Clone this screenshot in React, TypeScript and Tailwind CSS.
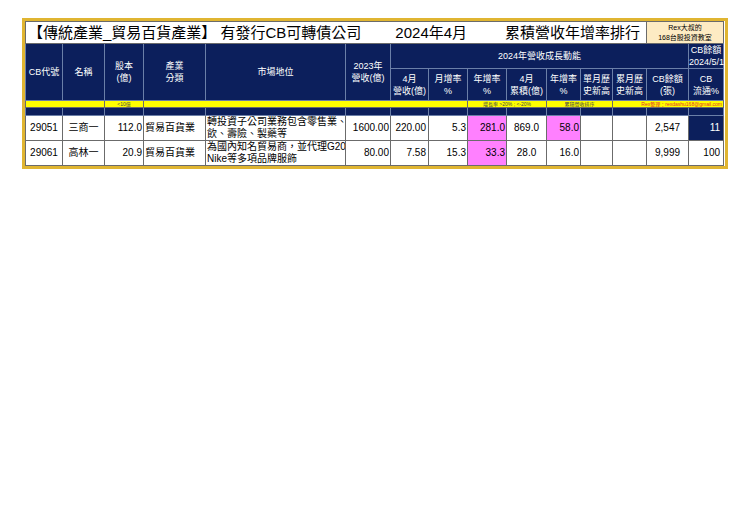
const W = [37, 42, 39, 62, 140, 45, 38, 39, 39, 40, 34, 32, 34, 42, 35];

const th = "border border-[#6b7fa8] bg-[#0c1f5c] text-white font-normal text-[9px] leading-[12px] text-center align-middle";
const td = "border border-[#6b6b6b] text-[10px] leading-[12px] text-black align-middle";

type Row = {
  code: string; name: string; cap: string; ind: string; pos: [string, string]; rev: string;
  m: string; mom: string; yoy: string; cum: string; cyoy: string; cb: string; flow: string;
  yoyPink: boolean; cyoyPink: boolean; flowNavy: boolean;
};

const rows: Row[] = [
  { code: "29051", name: "三商一", cap: "112.0", ind: "貿易百貨業", pos: ["轉投資子公司業務包含零售業、餐", "飲、壽險、製藥等"], rev: "1600.00", m: "220.00", mom: "5.3", yoy: "281.0", cum: "869.0", cyoy: "58.0", cb: "2,547", flow: "11", yoyPink: true, cyoyPink: true, flowNavy: true },
  { code: "29061", name: "高林一", cap: "20.9", ind: "貿易百貨業", pos: ["為國內知名貿易商，並代理G2000、", "Nike等多項品牌服飾"], rev: "80.00", m: "7.58", mom: "15.3", yoy: "33.3", cum: "28.0", cyoy: "16.0", cb: "9,999", flow: "100", yoyPink: true, cyoyPink: false, flowNavy: false },
];

export default function App() {
  return (
    <div className="w-[740px] h-[523px] bg-white pt-[18px] pl-[22px]" style={{ fontFamily: '"Liberation Sans", "Noto Sans CJK TC", sans-serif' }}>
      <div className="w-[706px] border-[3px] border-[#e0b531] bg-white overflow-hidden">
        <table className="border-collapse table-fixed w-[698px]">
          <colgroup>
            {W.map((w, i) => <col key={i} style={{ width: w }} />)}
          </colgroup>
          <tbody>
            <tr className="h-[22px]">
              <td colSpan={13} className="border border-[#6b6b6b] text-[15px] leading-[20px] text-black whitespace-nowrap pl-[2px]">
                【傳統產業_貿易百貨產業】 有發行CB可轉債公司<span className="ml-[34px]">2024年4月</span><span className="ml-[38px]">累積營收年增率排行</span>
              </td>
              <td colSpan={2} className="border border-[#6b6b6b] bg-[#fdebc3] text-[7px] leading-[10px] text-center">
                Rex大叔的<br />168台股投資教室
              </td>
            </tr>
            <tr className="h-[20px]">
              <th rowSpan={2} className={th}>CB代號</th>
              <th rowSpan={2} className={th}>名稱</th>
              <th rowSpan={2} className={th}>股本<br />(億)</th>
              <th rowSpan={2} className={th}>產業<br />分類</th>
              <th rowSpan={2} className={th}>市場地位</th>
              <th rowSpan={2} className={th}>2023年<br />營收(億)</th>
              <th colSpan={8} className={th}>2024年營收成長動能</th>
              <th colSpan={2} className={th}>CB餘額<br />2024/5/10</th>
            </tr>
            <tr className="h-[32px]">
              <th className={th}>4月<br />營收(億)</th>
              <th className={th}>月增率<br />%</th>
              <th className={th}>年增率<br />%</th>
              <th className={th}>4月<br />累積(億)</th>
              <th className={th}>年增率<br />%</th>
              <th className={th}>單月歷<br />史新高</th>
              <th className={th}>累月歷<br />史新高</th>
              <th className={th}>CB餘額<br />(張)</th>
              <th className={th}>CB<br />流通%</th>
            </tr>
            <tr className="h-[7px] bg-[#ffff00] text-[5px] leading-[6px] text-[#444]">
              <td colSpan={2} className="border border-[#6b6b6b]"></td>
              <td className="border border-[#6b6b6b] text-center">&lt;10億</td>
              <td colSpan={5} className="border border-[#6b6b6b]"></td>
              <td colSpan={2} className="border border-[#6b6b6b] text-center whitespace-nowrap">增長率 &gt;20% ; &lt;-20%</td>
              <td colSpan={2} className="border border-[#6b6b6b] text-center">累積營收排序</td>
              <td colSpan={4} className="border border-[#6b6b6b] text-right text-[#e03030] whitespace-nowrap pr-[1px]">Rex整理：rexdashu168@gmail.com</td>
            </tr>
            <tr className="h-[8px] bg-[#0c1f5c]">
              {W.map((_, i) => <td key={i} className="border border-[#6b7fa8]"></td>)}
            </tr>
            {rows.map((r) => (
              <tr key={r.code} className="h-[25px]">
                <td className={`${td} text-center`}>{r.code}</td>
                <td className={`${td} text-center`}>{r.name}</td>
                <td className={`${td} text-right pr-[1px]`}>{r.cap}</td>
                <td className={`${td} text-left text-[9px] pl-[1px] whitespace-nowrap`}>{r.ind}</td>
                <td className={`${td} text-left text-[9px] px-[1px] whitespace-nowrap overflow-hidden`}>{r.pos[0]}<br />{r.pos[1]}</td>
                <td className={`${td} text-right pr-[1px]`}>{r.rev}</td>
                <td className={`${td} text-right pr-[2px]`}>{r.m}</td>
                <td className={`${td} text-right pr-[1px]`}>{r.mom}</td>
                <td className={`${td} text-right pr-[1px] ${r.yoyPink ? "bg-[#ff80ff]" : ""}`}>{r.yoy}</td>
                <td className={`${td} text-center`}>{r.cum}</td>
                <td className={`${td} text-right pr-[1px] ${r.cyoyPink ? "bg-[#ff80ff]" : ""}`}>{r.cyoy}</td>
                <td className={td}></td>
                <td className={td}></td>
                <td className={`${td} text-center`}>{r.cb}</td>
                <td className={`${td} text-right pr-[3px] ${r.flowNavy ? "bg-[#0c1f5c] text-white" : ""}`}>{r.flow}</td>
              </tr>
            ))}
          </tbody>
        </table>
      </div>
    </div>
  );
}
